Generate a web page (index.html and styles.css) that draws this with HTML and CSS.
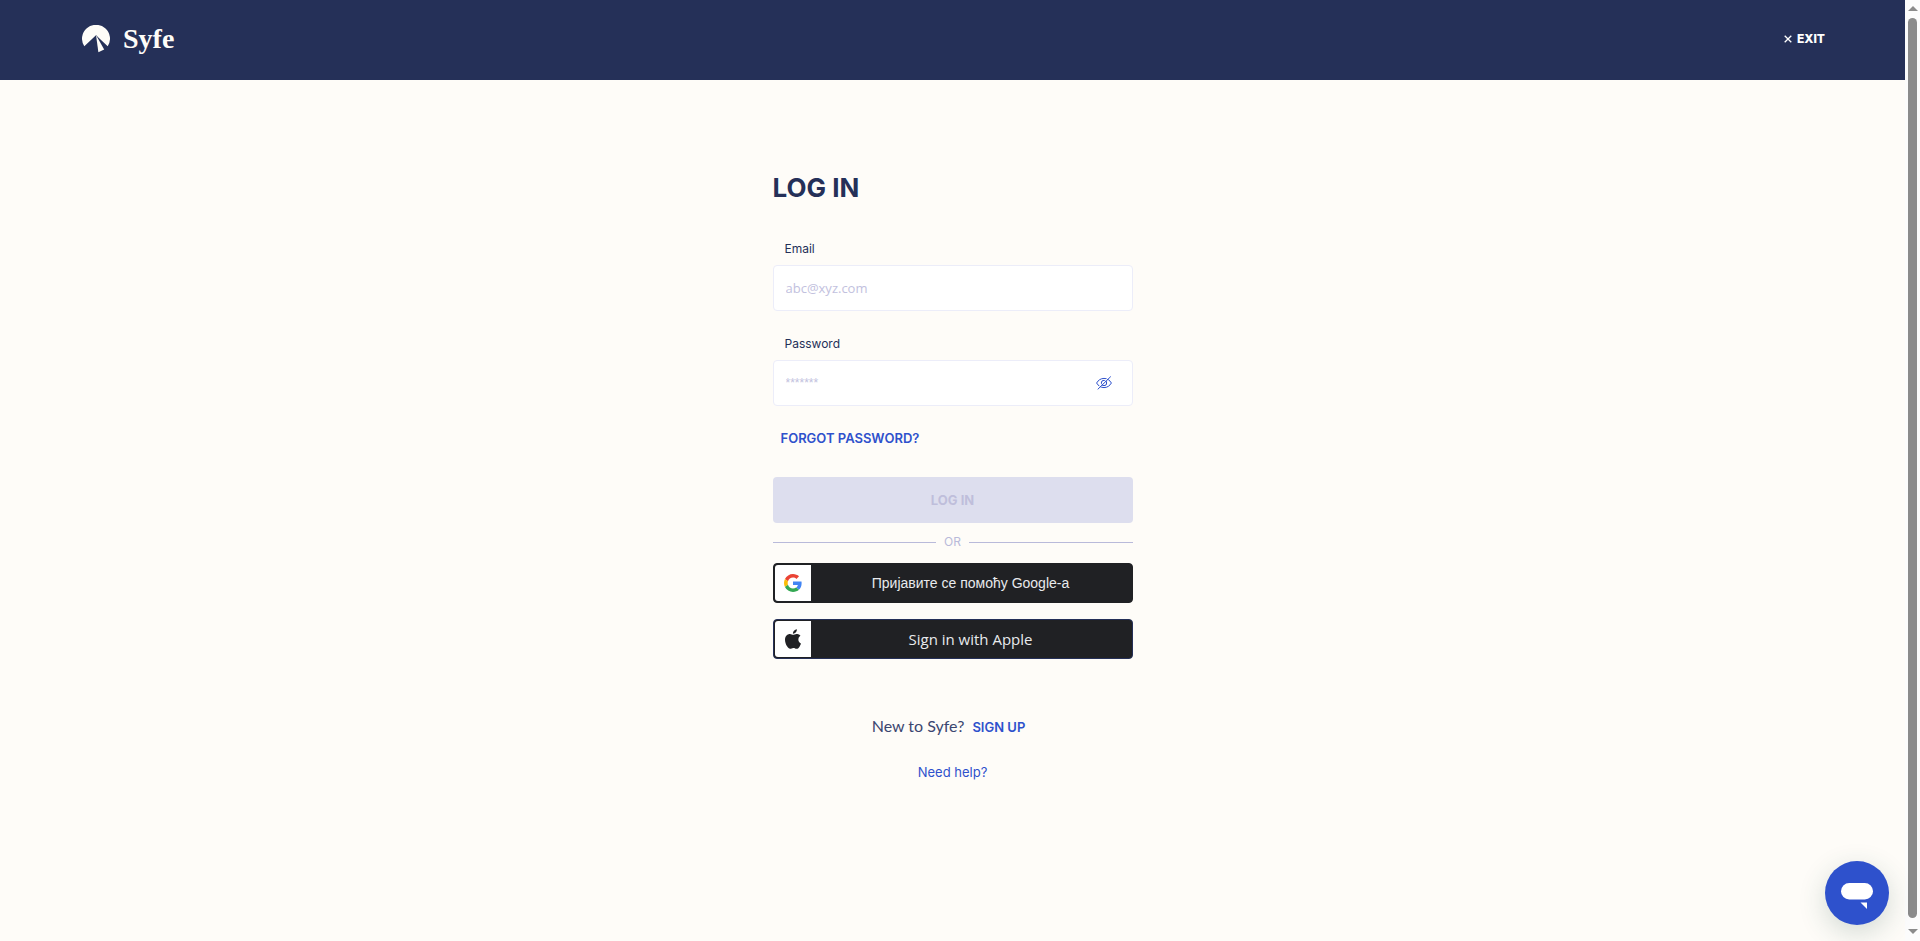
FILE: index.html
```html
<!DOCTYPE html>
<html lang="en">
<head>
<meta charset="utf-8">
<title>Syfe - Log in</title>
<meta name="viewport" content="width=device-width, initial-scale=1">
<link rel="stylesheet" href="styles.css">
</head>
<body>
<div class="page">
  <header class="topbar">
    <a class="brand" href="#">
      <svg class="brand-mark" viewBox="0 0 28 28" aria-hidden="true">
        <path d="M2.3 21.2A14 13.8 0 1 1 25.7 21.2L14 10.2Z"/>
        <path class="brand-gap" d="M14 10L16.2 28L24.6 24.4Z"/>
        <path d="M14 10L16.4 27.3L22.2 24.6Z"/>
      </svg>
      <span class="brand-name">Syfe</span>
    </a>
    <button class="exit" type="button">
      <svg class="exit-icon" viewBox="0 0 8 8" aria-hidden="true"><path d="M.7.7L7.3 7.3M7.3.7L.7 7.3"/></svg>
      <span>EXIT</span>
    </button>
  </header>
  <main class="content">
    <h1 class="title">LOG IN</h1>
    <form class="form">
      <div class="field">
        <label class="label" for="email">Email</label>
        <div class="box"><input class="input" id="email" type="email" placeholder="abc@xyz.com"></div>
      </div>
      <div class="field">
        <label class="label" for="password">Password</label>
        <div class="box">
          <input class="input input-password" id="password" type="password" placeholder="*******">
          <button class="reveal" type="button" aria-label="Show password">
            <svg class="reveal-icon" viewBox="0 0 16 14" aria-hidden="true">
              <path d="M.6 7C2.2 4.2 4.8 2.4 8 2.4S13.800 4.200 15.400 7C13.800 9.800 11.200 11.600 8 11.600S2.200 9.800.600 7Z"/>
              <circle cx="8" cy="7" r="2.700"/>
              <path class="reveal-gap" d="M1.200 12.600L13.600 .2"/>
              <path d="M1.700 13.400L14.800 .5"/>
            </svg>
          </button>
        </div>
      </div>
      <a class="forgot" href="#">FORGOT PASSWORD?</a>
      <button class="submit" type="submit" disabled>LOG IN</button>
    </form>
    <div class="divider">OR</div>
    <div class="providers">
      <button class="provider" type="button">
        <span class="provider-icon">
          <svg class="google" viewBox="0 0 48 48" aria-hidden="true">
            <path fill="#ea4335" d="M24 9.500c3.540 0 6.710 1.220 9.210 3.600l6.850-6.850C35.900 2.380 30.470 0 24 0 14.620 0 6.510 5.380 2.560 13.220l7.980 6.190C12.430 13.720 17.740 9.500 24 9.500z"/>
            <path fill="#4285f4" d="M46.980 24.550c0-1.570-.15-3.090-.38-4.550H24v9.020h12.940c-.58 2.960-2.260 5.480-4.780 7.180l7.730 6c4.510-4.180 7.090-10.360 7.090-17.650z"/>
            <path fill="#fbbc05" d="M10.530 28.590c-.48-1.450-.76-2.990-.76-4.590s.27-3.140.76-4.590l-7.980-6.190C.92 16.460 0 20.120 0 24c0 3.880.92 7.540 2.560 10.780l7.970-6.190z"/>
            <path fill="#34a853" d="M24 48c6.480 0 11.930-2.130 15.890-5.810l-7.730-6c-2.150 1.450-4.920 2.300-8.160 2.300-6.260 0-11.570-4.220-13.470-9.910l-7.980 6.190C6.510 42.620 14.620 48 24 48z"/>
          </svg>
        </span>
        <span class="provider-text">Пријавите се помоћу Google-а</span>
      </button>
      <button class="provider provider-apple" type="button">
        <span class="provider-icon">
          <svg class="apple" viewBox="0 0 814 1000" aria-hidden="true"><path d="M788.100 340.900c-5.800 4.500-108.200 62.200-108.200 190.500 0 148.400 130.300 200.900 134.200 202.200-.6 3.200-20.700 71.900-68.700 141.900-42.800 61.600-87.500 123.100-155.500 123.100s-85.500-39.500-164-39.500c-76.500 0-103.700 40.800-165.900 40.800s-105.600-57-155.500-127C46.700 790.700 0 663 0 541.800c0-194.400 126.400-297.500 250.800-297.500 66.100 0 121.200 43.400 162.700 43.400 39.500 0 101.100-46 176.300-46 28.500 0 130.900 2.600 198.300 99.200zm-234-181.500c31.100-36.900 53.100-88.100 53.100-139.300 0-7.100-.6-14.300-1.900-20.100-50.600 1.900-110.800 33.700-147.100 75.800-28.500 32.400-55.100 83.600-55.100 135.500 0 7.800 1.300 15.600 1.900 18.100 3.200.6 8.400 1.300 13.600 1.300 45.400 0 102.500-30.400 135.500-71.300z"/></svg>
        </span>
        <span class="provider-text provider-text-apple">Sign in with Apple</span>
      </button>
    </div>
    <p class="signup">New to Syfe? <a class="signup-link" href="#">SIGN UP</a></p>
    <a class="help" href="#">Need help?</a>
  </main>
</div>
<div class="scrollbar" aria-hidden="true">
  <span class="arrow arrow-up"></span>
  <span class="thumb"></span>
  <span class="arrow arrow-down"></span>
</div>
<button class="chat" type="button" aria-label="Open chat">
  <svg class="chat-icon" viewBox="0 0 32 26" aria-hidden="true"><rect width="32" height="16.500" rx="8.250"/><path d="M19.500 19.500H26V26Z"/></svg>
</button>
</body>
</html>
```
FILE: styles.css
```css
*, *::before, *::after { box-sizing: border-box; }

body {
  margin: 0;
  min-height: 100vh;
  display: flex;
  background: #fefcf8;
  color: #253058;
  font-family: Inter, "Liberation Sans", sans-serif;
}

button, input { font: inherit; }
button { padding: 0; border: 0; background: none; cursor: pointer; }
a { color: #2e51cc; text-decoration: none; }

.page { flex: 1; min-width: 0; }

.topbar {
  height: 80px;
  padding: 0 80px 2px 82px;
  display: flex;
  align-items: center;
  justify-content: space-between;
  background: #253058;
}
.brand { display: flex; align-items: center; gap: 13px; color: #fefcf8; }
.brand-mark { width: 28px; height: 28px; fill: #fefcf8; }
.brand-mark .brand-gap { fill: #253058; }
.brand-name { font: bold 28px/32px "Liberation Serif", serif; }

.exit {
  display: flex;
  align-items: center;
  gap: 5px;
  color: #fff;
  font-size: 12px;
  font-weight: 800;
  line-height: 16px;
}
.exit-icon { width: 8px; height: 8px; fill: none; stroke: #fff; stroke-width: 1.3; }

.content {
  width: 100%;
  max-width: 360px;
  margin: 0 auto;
  padding: 92px 0 32px;
  display: flex;
  flex-direction: column;
}
.title { margin: 0; font-size: 26px; line-height: 32px; font-weight: 700; }

.form { margin-top: 36px; display: flex; flex-direction: column; }
.field { margin-bottom: 24px; }
.label { display: block; padding: 0 12px; margin-bottom: 7px; font-size: 12px; line-height: 18px; }
.box {
  display: flex;
  align-items: center;
  height: 46px;
  padding: 0 20px 0 12px;
  border: 1px solid #ecedf9;
  border-radius: 4px;
  background: #fff;
}
.input {
  flex: 1;
  min-width: 0;
  padding: 0;
  border: 0;
  outline: 0;
  background: none;
  color: #253058;
  font: 13px/20px "Open Sans", sans-serif;
}
.input-password { font: 12px/20px "Liberation Sans", sans-serif; }
.input::placeholder { color: #c2c1de; opacity: 1; }
.reveal { display: flex; }
.reveal-icon { width: 16px; height: 14px; fill: none; stroke: #2e51cc; stroke-width: 1; }
.reveal-icon .reveal-gap { stroke: #fff; }

.forgot { align-self: flex-start; padding-left: 8px; font-size: 13px; line-height: 16px; font-weight: 600; }
.submit {
  height: 46px;
  margin-top: 31px;
  border-radius: 4px;
  background: #dddeee;
  color: #bfbedb;
  font-size: 13px;
  font-weight: 700;
}

.divider {
  margin: 11px 0 13px;
  display: flex;
  align-items: center;
  gap: 8px;
  color: #b9bada;
  font-size: 12px;
  line-height: 16px;
}
.divider::before, .divider::after { content: ""; flex: 1; height: 1px; background: #b9bada; }

.providers { display: flex; flex-direction: column; gap: 16px; }
.provider {
  height: 40px;
  padding: 1px;
  display: flex;
  align-items: center;
  border: 1px solid #202124;
  border-radius: 4px;
  background: #202124;
  color: #e8eaed;
}
.provider-apple { border-color: #253058; }
.provider-icon {
  width: 36px;
  height: 36px;
  display: flex;
  align-items: center;
  justify-content: center;
  border-radius: 3px 0 0 3px;
  background: #fff;
}
.google { width: 18px; height: 18px; }
.apple { width: 16px; height: 20px; fill: #202124; }
.provider-text { flex: 1; font: 14px/20px "Liberation Sans", sans-serif; }
.provider-text-apple { font: 15px/20px "Open Sans", sans-serif; }

.signup { margin: 55px 8px 0 0; text-align: center; font: 16px/24px Lato, sans-serif; color: #3b4670; }
.signup-link { margin-left: 4px; font: 600 13px/16px Inter, sans-serif; }
.help { align-self: center; margin-top: 24px; font-size: 13px; line-height: 20px; }

.scrollbar {
  position: sticky;
  top: 0;
  width: 15px;
  height: 100vh;
  padding: 6px 3px 7px;
  display: flex;
  flex-direction: column;
  align-items: center;
  background: #fcfcfc;
}
.thumb { flex: 1; width: 9px; margin: 7px 0 11px; border-radius: 5px; background: #8b8b8b; }
.arrow { border: 0 solid transparent; border-left-width: 5px; border-right-width: 5px; }
.arrow-up { border-bottom: 5px solid #8b8b8b; }
.arrow-down { border-top: 5px solid #8b8b8b; }

.chat {
  position: fixed;
  right: 31px;
  bottom: 16px;
  width: 64px;
  height: 64px;
  display: flex;
  align-items: center;
  justify-content: center;
  border-radius: 50%;
  background: #2e51cc;
  box-shadow: 0 8px 28px rgba(35, 80, 70, 0.2);
}
.chat-icon { width: 32px; height: 26px; margin-top: 6px; fill: #fff; }
```
